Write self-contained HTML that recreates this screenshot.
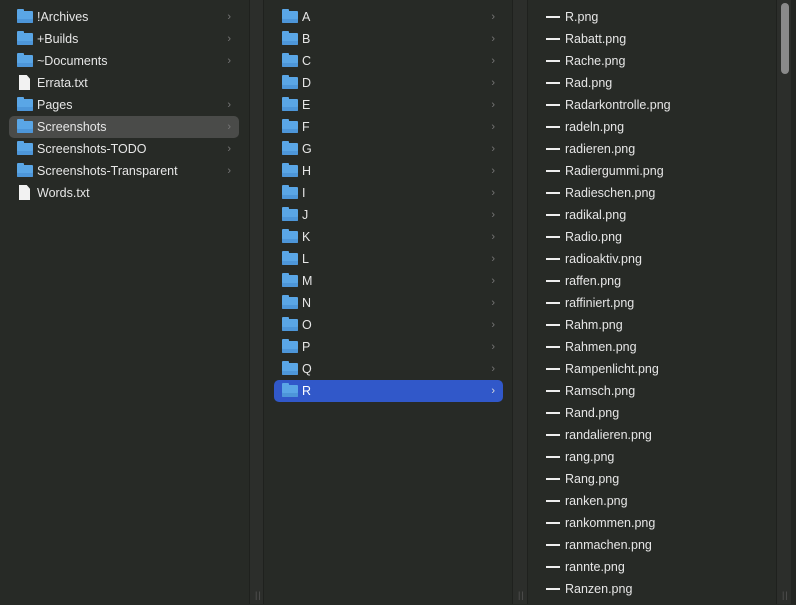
<!DOCTYPE html><html><head><style>
body{margin:0;width:796px;height:604px;background:#272a26;font-family:"Liberation Sans",sans-serif;font-size:12.5px;color:#e6e6e6;position:relative;overflow:hidden}
.col{position:absolute;top:1px;height:604px}
.g{position:absolute;top:0;height:604px;background:#2c2e2b;border-left:1px solid #1f211e;border-right:1px solid #1f211e}
.g span{position:absolute;bottom:4px;left:5px;color:#555;font-size:9px;letter-spacing:1px}
.r{position:absolute;left:9px;height:22px;line-height:22px;border-radius:5px}
.r .t{position:absolute;left:28px}
.r .a{position:absolute;right:8px;color:#777;font-size:11px}
.f{position:absolute;left:8px;top:5px;width:16px;height:12px;background:#5aa6e6;border-radius:1px;box-shadow:inset 0 -4px 0 #4d96d9}
.f:before{content:"";position:absolute;left:0;top:-2px;width:7px;height:3px;background:#5aa6e6;border-radius:1px 1px 0 0}
.d{position:absolute;left:10px;top:3px;width:11px;height:15px;background:#f2f2f2;clip-path:polygon(0 0,70% 0,100% 25%,100% 100%,0 100%)}
.m{position:absolute;left:18px;top:10px;width:14px;height:2px;background:#eee}
</style></head><body>
<div class="col" style="left:0;width:249px">
<div class="r" style="top:5px;width:230px"><i class="f"></i><span class="t">!Archives</span><span class="a">›</span></div>
<div class="r" style="top:27px;width:230px"><i class="f"></i><span class="t">+Builds</span><span class="a">›</span></div>
<div class="r" style="top:49px;width:230px"><i class="f"></i><span class="t">~Documents</span><span class="a">›</span></div>
<div class="r" style="top:71px;width:230px"><i class="d"></i><span class="t">Errata.txt</span></div>
<div class="r" style="top:93px;width:230px"><i class="f"></i><span class="t">Pages</span><span class="a">›</span></div>
<div class="r" style="top:115px;width:230px;background:#4a4b49"><i class="f"></i><span class="t">Screenshots</span><span class="a">›</span></div>
<div class="r" style="top:137px;width:230px"><i class="f"></i><span class="t">Screenshots-TODO</span><span class="a">›</span></div>
<div class="r" style="top:159px;width:230px"><i class="f"></i><span class="t">Screenshots-Transparent</span><span class="a">›</span></div>
<div class="r" style="top:181px;width:230px"><i class="d"></i><span class="t">Words.txt</span></div>
</div>
<div class="g" style="left:249px;width:13px"><span>||</span></div>
<div class="col" style="left:265px;width:247px" id="c2"></div>
<div class="g" style="left:512px;width:14px"><span>||</span></div>
<div class="col" style="left:528px;width:248px" id="c3"></div>
<div class="g" style="left:776px;width:14px"><div style="position:absolute;left:4px;top:3px;width:8px;height:71px;background:#8a8a8a;border-radius:4px"></div><span>||</span></div>
<div style="position:absolute;left:791px;top:0;width:5px;height:604px;background:#232522"></div>
<script>
var c2=document.getElementById('c2'),h='';
'ABCDEFGHIJKLMNOPQR'.split('').forEach(function(l,i){h+='<div class="r" style="top:'+(5+i*22)+'px;width:229px'+(l=='R'?';background:#3158c9;color:#fff':'')+'"><i class="f"></i><span class="t">'+l+'</span><span class="a"'+(l=='R'?' style="color:#ddd"':'')+'>›</span></div>'});
c2.innerHTML=h;h='';
'R.png Rabatt.png Rache.png Rad.png Radarkontrolle.png radeln.png radieren.png Radiergummi.png Radieschen.png radikal.png Radio.png radioaktiv.png raffen.png raffiniert.png Rahm.png Rahmen.png Rampenlicht.png Ramsch.png Rand.png randalieren.png rang.png Rang.png ranken.png rankommen.png ranmachen.png rannte.png Ranzen.png'.split(' ').forEach(function(n,i){h+='<div class="r" style="left:0;top:'+(5+i*22)+'px;width:240px"><i class="m"></i><span class="t" style="left:37px">'+n+'</span></div>'});
document.getElementById('c3').innerHTML=h;
</script>
</body></html>
